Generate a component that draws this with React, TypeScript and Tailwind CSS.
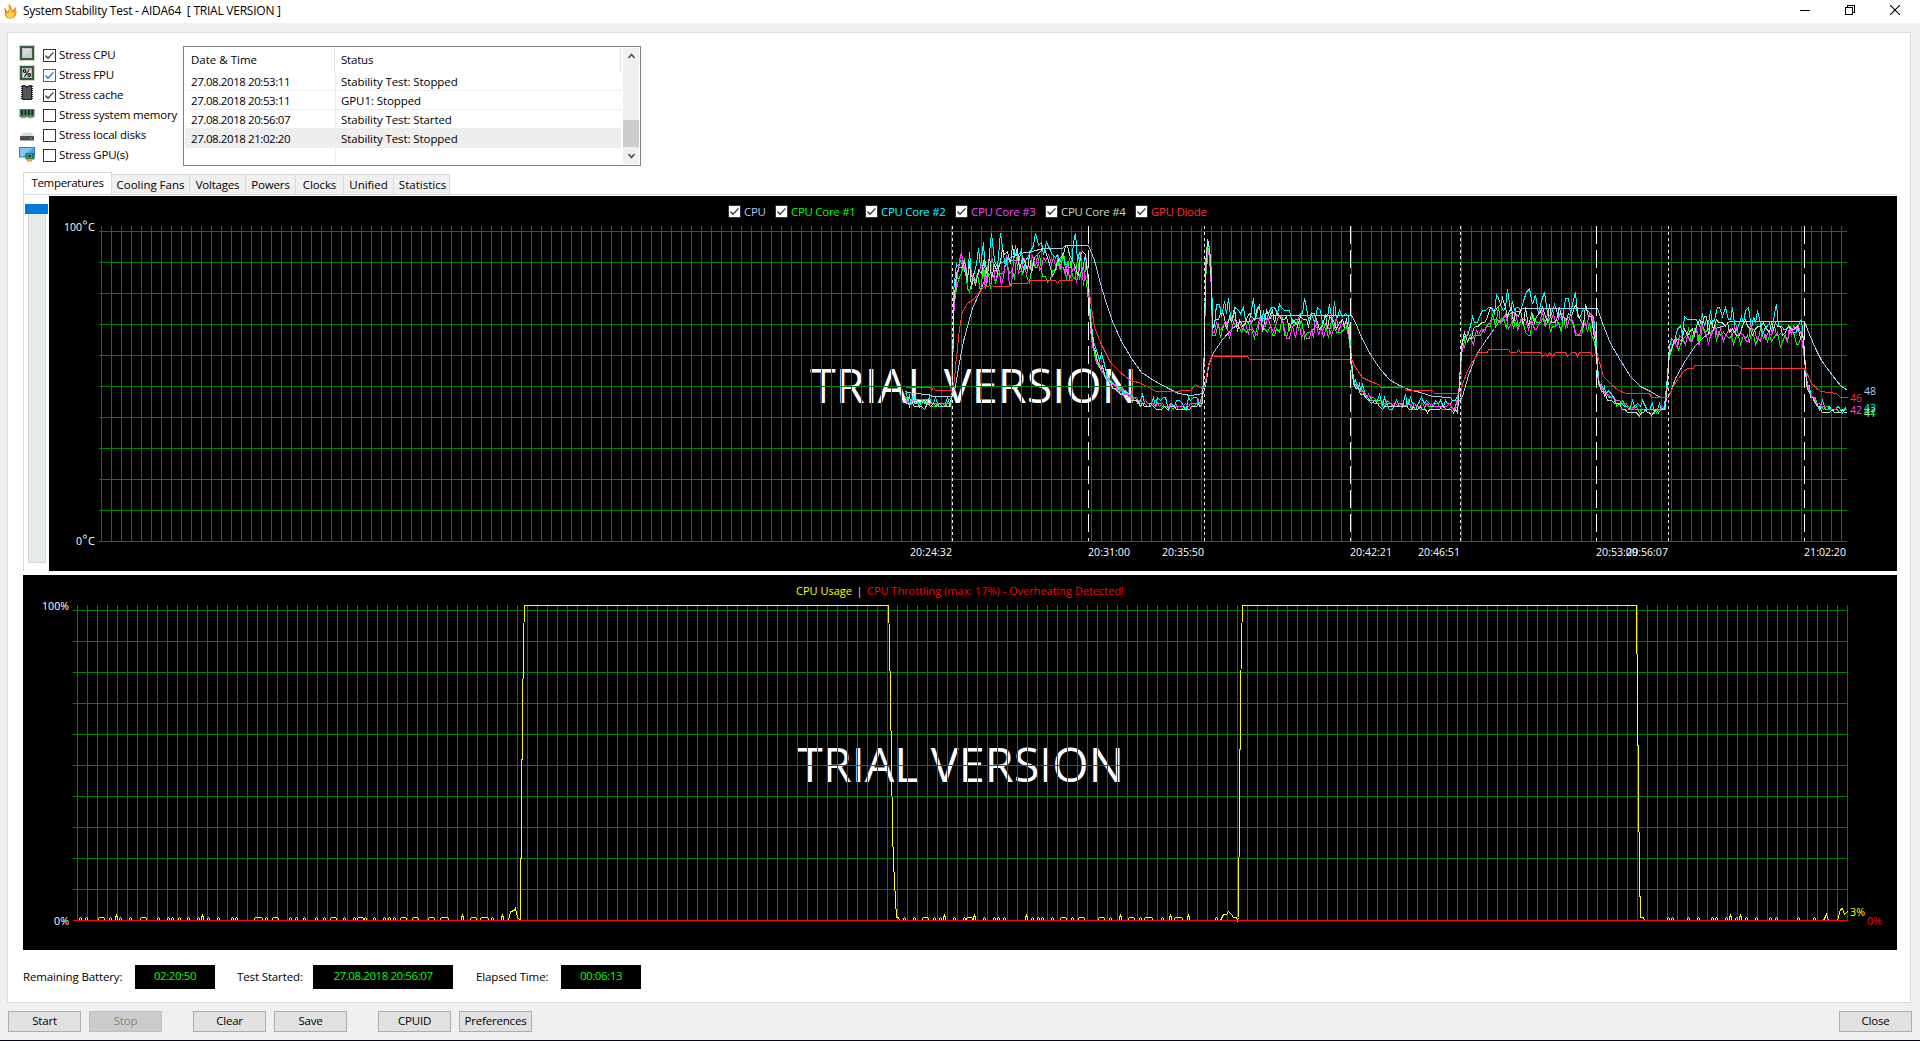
import React from "react";

type Pt = [number, number];
type NoisyPt = [number, number, number];

/* ---------- sensor data ---------- */

const cpuPts: Pt[] = [
  [905, 391], [912, 393], [928, 394], [932, 396], [951, 396], [955, 386], [958, 367], [963, 341], [967, 326], [972, 308],
  [980, 290], [984, 280], [990, 273], [995, 270], [1000, 263], [1008, 258], [1020, 253], [1032, 251], [1042, 248], [1062, 248], [1065, 245],
  [1088, 245], [1094, 260], [1100, 283], [1106, 303], [1112, 321], [1121, 341], [1131, 358], [1141, 372], [1155, 381],
  [1168, 388], [1178, 393], [1190, 395], [1203, 393], [1206, 380], [1208, 366], [1212, 354], [1222, 339], [1232, 328],
  [1242, 321], [1252, 321], [1253, 318], [1270, 318], [1271, 315], [1351, 315], [1355, 322], [1361, 337], [1370, 354], [1380, 369],
  [1389, 379], [1397, 384], [1408, 389], [1420, 392], [1432, 396], [1450, 397], [1452, 400], [1459, 400], [1462, 396], [1468, 375],
  [1476, 354], [1486, 339], [1494, 328], [1500, 319], [1512, 312], [1520, 311], [1522, 308], [1597, 308], [1602, 323], [1610, 343],
  [1620, 360], [1630, 376], [1640, 386], [1650, 391], [1660, 397], [1668, 397], [1675, 378], [1685, 360], [1695, 345],
  [1703, 337], [1715, 328], [1725, 325], [1729, 321], [1804, 321], [1809, 334], [1815, 348], [1821, 360], [1832, 375],
  [1840, 385], [1847, 390],
];

const gpuPts: Pt[] = [
  [905, 387], [930, 387], [931, 390], [933, 387], [935, 390], [951, 390], [954, 380], [955, 365], [957, 348], [959, 328], [962, 311],
  [967, 303], [974, 298], [980, 290], [984, 286], [988, 286], [990, 283], [993, 286], [1009, 286], [1010, 283], [1027, 283], [1028, 280], [1055, 280], [1057, 283],
  [1059, 280], [1072, 280], [1073, 277], [1087, 277], [1090, 300], [1094, 327], [1100, 342], [1110, 362], [1120, 372], [1130, 380],
  [1138, 382], [1145, 385], [1155, 391], [1178, 391], [1180, 390], [1190, 390], [1195, 384], [1199, 387], [1204, 387], [1208, 364],
  [1211, 356], [1247, 356], [1249, 359], [1351, 359], [1355, 367], [1362, 377], [1370, 381], [1378, 384], [1380, 387], [1404, 387],
  [1406, 390], [1432, 390], [1434, 393], [1460, 393], [1463, 381], [1468, 368], [1478, 352], [1487, 352], [1488, 349],
  [1508, 349], [1510, 352], [1516, 352], [1518, 349], [1520, 352], [1540, 352], [1542, 356], [1545, 353], [1547, 356], [1549, 352], [1552, 356],
  [1555, 352], [1565, 352], [1567, 356], [1571, 352], [1575, 352], [1577, 356], [1579, 352], [1590, 352], [1592, 356], [1596, 352],
  [1599, 362], [1603, 376], [1610, 383], [1618, 390], [1626, 393], [1649, 393], [1651, 397], [1668, 397], [1673, 385],
  [1683, 371], [1687, 368], [1693, 368], [1694, 365], [1738, 365], [1741, 368], [1804, 368], [1808, 376], [1811, 383], [1820, 391], [1836, 393],
  [1840, 397], [1847, 397],
];

// x, mean y, noise amplitude
const coreBase: NoisyPt[] = [
  [905, 396, 3], [910, 400, 4], [930, 401, 5], [950, 401, 5], [952, 388, 0], [953, 300, 6], [955, 276, 10], [959, 262, 18], [963, 250, 18], [966, 275, 16],
  [975, 267, 14], [990, 262, 17], [1010, 258, 16], [1040, 254, 16], [1086, 258, 16], [1088, 282, 2], [1090, 318, 1],
  [1093, 340, 2], [1096, 352, 4], [1100, 360, 6], [1105, 373, 5], [1115, 385, 4], [1130, 394, 4], [1145, 400, 4],
  [1155, 403, 5], [1170, 404, 5], [1190, 403, 5], [1202, 398, 3], [1204, 345, 0], [1205, 265, 4], [1207, 238, 3], [1209, 242, 8], [1211, 268, 2],
  [1212, 322, 4], [1216, 318, 10], [1225, 315, 12], [1280, 315, 12], [1346, 316, 11], [1349, 330, 2], [1351, 358, 1], [1353, 380, 3], [1360, 388, 4],
  [1370, 396, 4], [1380, 401, 5], [1395, 402, 5], [1430, 404, 5], [1457, 405, 4], [1459, 380, 0], [1461, 345, 2], [1464, 332, 10],
  [1480, 319, 9], [1490, 308, 10], [1500, 303, 11], [1510, 306, 11], [1520, 311, 12], [1592, 311, 12], [1596, 345, 2],
  [1598, 380, 2], [1605, 391, 4], [1615, 399, 5], [1630, 406, 5], [1650, 407, 5], [1665, 405, 4], [1667, 375, 0],
  [1669, 345, 2], [1674, 336, 7], [1682, 329, 9], [1692, 320, 11], [1720, 322, 11], [1802, 324, 11], [1804, 350, 1],
  [1806, 380, 2], [1810, 390, 4], [1817, 400, 5], [1824, 406, 4], [1846, 408, 4],
];

const markers: { x: number; kind: "start" | "stop"; time: string }[] = [
  { x: 952, kind: "start", time: "20:24:32" },
  { x: 1088, kind: "stop", time: "20:31:00" },
  { x: 1204, kind: "start", time: "20:35:50" },
  { x: 1350, kind: "stop", time: "20:42:21" },
  { x: 1460, kind: "start", time: "20:46:51" },
  { x: 1596, kind: "stop", time: "20:53:09" },
  { x: 1668, kind: "start", time: "20:56:07" },
  { x: 1804, kind: "stop", time: "21:02:20" },
];

function rng(seed: number) {
  let s = seed;
  return () => {
    s = (s * 1664525 + 1013904223) % 4294967296;
    return s / 4294967296;
  };
}

function sample(points: NoisyPt[], x: number): [number, number] {
  for (let i = 1; i < points.length; i++) {
    if (x <= points[i][0]) {
      const a = points[i - 1];
      const b = points[i];
      const t = (x - a[0]) / (b[0] - a[0]);
      return [a[1] + (b[1] - a[1]) * t, a[2] + (b[2] - a[2]) * t];
    }
  }
  const last = points[points.length - 1];
  return [last[1], last[2]];
}

// Steep edges keep a fine step; the noisy plateaus are sampled every two or three pixels.
function coreLine(seed: number, hot: number, cold: number, coldAmp: number, spike: number) {
  const rand = rng(seed);
  const out: string[] = [];
  let x = 905;
  while (x <= 1846) {
    const [y, amp] = sample(coreBase, x);
    const w = Math.max(0, Math.min(1, (385 - y) / 60));
    const r = rand() * 2 - 1;
    const shaped = Math.sign(r) * Math.pow(Math.abs(r), 1.4) * 1.15;
    const n = shaped < 0 ? shaped * spike : shaped * 0.9;
    const a = w > 0.5 ? amp : amp * coldAmp;
    const v = y + cold + (hot - cold) * w + n * a;
    out.push(`${x + 0.5},${Math.round(v / 3.1) * 3.1 + 0.5}`);
    x += amp < 4 ? 1 : rand() > 0.5 ? 3 : 2;
  }
  return out.join(" ");
}

const toLine = (pts: Pt[]) => pts.map(([x, y]) => `${x + 0.5},${y + 0.5}`).join(" ");

const series = [
  { color: "#a6caf0", points: toLine(cpuPts) },
  { color: "#00ff00", points: coreLine(77, 12, 2, 0.8, 0.9) },
  { color: "#00ffff", points: coreLine(19, -1, 1, 1.1, 1.5) },
  { color: "#ff40ff", points: coreLine(5, 12, 2, 0.5, 1) },
  { color: "#c0dcc0", points: coreLine(41, 4, 5, 0.6, 0.9) },
  { color: "#ff3030", points: toLine(gpuPts) },
];

/* CPU usage: small one-percent blips along the floor. [x, half plateau, height] */
const blips: [number, number, number][] = [
  [80, 0, 3], [86, 0, 3], [101, 2, 3], [110, 0, 3], [116, 0, 6], [120, 0, 3], [130, 0, 3], [143, 2, 3], [158, 0, 3],
  [168, 0, 3], [172, 0, 3], [179, 0, 3], [188, 0, 3], [198, 0, 3], [202, 0, 6], [208, 0, 3], [218, 0, 3], [232, 0, 3],
  [236, 0, 3], [258, 3, 3], [266, 0, 3], [275, 2, 3], [290, 0, 3], [296, 0, 3], [304, 0, 3], [316, 0, 3], [324, 0, 3],
  [333, 2, 3], [344, 0, 3], [354, 0, 3], [360, 2, 3], [365, 0, 3], [374, 0, 3], [384, 0, 3], [389, 0, 3], [394, 0, 3],
  [403, 2, 3], [415, 2, 3], [431, 2, 3], [444, 3, 3], [462, 0, 6], [473, 2, 3], [484, 3, 3], [492, 0, 3], [502, 0, 6],
];
const blips2: [number, number, number][] = [
  [904, 0, 3], [914, 0, 3], [925, 2, 3], [934, 0, 3], [940, 0, 3], [944, 0, 6], [954, 0, 3], [964, 0, 3], [969, 2, 3],
  [974, 0, 6], [984, 0, 3], [994, 0, 3], [998, 0, 3], [1004, 0, 3], [1026, 0, 6], [1032, 0, 3], [1038, 0, 3],
  [1042, 0, 3], [1052, 0, 3], [1063, 2, 3], [1072, 0, 3], [1081, 2, 3], [1101, 2, 3], [1110, 0, 3], [1120, 0, 6],
  [1131, 2, 3], [1140, 0, 3], [1148, 3, 3], [1162, 0, 3], [1170, 0, 6], [1178, 3, 3], [1188, 0, 6], [1216, 0, 3],
];
const blips3: [number, number, number][] = [
  [1668, 0, 3], [1672, 0, 3], [1688, 0, 3], [1698, 0, 3], [1712, 0, 3], [1716, 0, 3], [1726, 0, 3], [1730, 0, 6],
  [1736, 0, 3], [1740, 0, 6], [1746, 0, 3], [1756, 0, 3], [1770, 0, 3], [1776, 0, 3], [1798, 0, 3], [1814, 0, 3], 
];
const blipPts = (list: [number, number, number][]): Pt[] =>
  list.flatMap(([x, p, h]): Pt[] => [[x - 1 - p, 920], [x - 1 - p, 918], [x - p, 920 - h], [x + p, 920 - h], [x + 1 + p, 918], [x + 1 + p, 920]]);

const usage = toLine([
  [77, 920], ...blipPts(blips), [508, 920], [510, 911], [514, 910], [515, 908], [517, 917], [519, 919], [520, 919],
  [521, 800], [522, 720], [523, 640], [524, 605], [888, 605], [889, 640], [890, 700], [891, 760], [892, 830], [893, 862],
  [894, 880], [895, 900], [896, 917], [898, 917], [899, 920], ...blipPts(blips2),
  [1220, 920], [1223, 914], [1226, 914], [1228, 911], [1231, 914], [1233, 917], [1236, 917], [1237, 920], [1238, 917],
  [1239, 800], [1240, 700], [1241, 640], [1242, 605], [1636, 605], [1637, 700], [1639, 874], [1640, 917], [1643, 917], [1644, 920],
  ...blipPts(blips3), [1823, 920], [1826, 914], [1827, 917], [1828, 920], [1837, 920], [1840, 909], [1842, 908], [1844, 914], [1847, 911],
]);

/* ---------- shared pieces ---------- */

function Check({ on, blue, light }: { on?: boolean; blue?: boolean; light?: boolean }) {
  const c = blue ? "#0078d7" : "#333333";
  return (
    <svg width="13" height="13" viewBox="0 0 13 13" className="shrink-0">
      <rect x="0.5" y="0.5" width="12" height="12" fill="#fff" stroke={light ? "#333" : c} />
      {on && <path d="M2.5 6.5 5 9.2 10.5 3.4" fill="none" stroke={blue ? c : "#333"} strokeWidth="1.3" />}
    </svg>
  );
}

function Label({
  x, y, w, fill = "#fff", size = 11.5, children,
}: { x: number; y: number; w: number; fill?: string; size?: number; children: string }) {
  return (
    <text x={x} y={y + 4} fill={fill} fontSize={size} textLength={w} lengthAdjust="spacingAndGlyphs">
      {children}
    </text>
  );
}

function Grid({ x0, x1, vx, top, first }: { x0: number; x1: number; vx: number; top: number; first: number }) {
  const cols: number[] = [];
  for (let x = vx; x <= x1; x += 10) cols.push(x);
  let d = "";
  for (const x of cols) d += `M${x + 0.5} ${top}V${first + 310}`;
  for (let i = 0; i <= 10; i++) d += `M${x0} ${first + i * 31 + 0.5}H${x1}`;
  return <path d={d} stroke="#008000" fill="none" />;
}

/* ---------- stress option icons ---------- */

const ChipIcon = ({ percent }: { percent?: boolean }) => (
  <svg width="16" height="16" viewBox="0 0 16 16">
    <rect x="0.5" y="0.5" width="15" height="15" fill="none" stroke="#b8a860" strokeDasharray="1 1" />
    <rect x="1" y="1" width="14" height="14" fill="#2e6045" />
    <rect x="3.5" y="3.5" width="9" height="9" fill={percent ? "#e4e4e4" : "#dcdcdc"} stroke={percent ? "#b5b5b5" : "#c4c4c4"} />
    {percent ? (
      <g stroke="#111" fill="none" strokeWidth="1.2">
        <circle cx="5.6" cy="6" r="1.3" />
        <circle cx="10.2" cy="10" r="1.3" />
        <path d="M10.3 4.2 5.6 11.8" />
      </g>
    ) : (
      <path d="M4 12 12 4v8z" fill="#cccccc" />
    )}
  </svg>
);

const CacheIcon = () => (
  <svg width="16" height="16" viewBox="0 0 16 16">
    <path d="M2 1.5h12M2 3.5h12M2 5.5h12M2 7.5h12M2 9.5h12M2 11.5h12M2 13.5h12" stroke="#222" />
    <path d="M3.500 .5H6l1 1.500h2l1-1.500h2.500v14h-9z" fill="#55555a" stroke="#1b1b1b" />
  </svg>
);

const MemoryIcon = () => (
  <svg width="16" height="16" viewBox="0 0 16 16">
    <rect x="0.5" y="3" width="15" height="8" fill="#3f8a63" />
    <path d="M2 4h2v5H2zM5.5 4h2v5h-2zM9 4h2v5H9zM12.4 4h2v5h-2z" fill="#26332c" />
    <path d="M2 11.5h5M9 11.5h5" stroke="#d08a3c" strokeWidth="1.4" />
  </svg>
);

const DiskIcon = () => (
  <svg width="16" height="16" viewBox="0 0 16 16">
    <path d="M4 6.5h8l3 4H1z" fill="#dadada" />
    <rect x="1" y="10" width="14" height="4.5" rx="0.8" fill="#4c4c4c" />
    <rect x="11" y="11.8" width="1.6" height="1.2" fill="#35d04a" />
  </svg>
);

const GpuIcon = () => (
  <svg width="16" height="16" viewBox="0 0 16 16">
    <rect x="0.5" y="1.5" width="15" height="9.5" fill="#47a7e6" stroke="#2b7fc0" />
    <path d="M1 2h13L4 10.5H1z" fill="#7cc8f5" />
    <rect x="6.5" y="7" width="9" height="6.5" fill="#2f7a4d" />
    <rect x="9" y="8.4" width="3.6" height="3.4" fill="#1b3626" stroke="#8bc4a0" strokeWidth="0.6" />
    <path d="M8 13.5h5v2H8z" fill="#e5a02c" />
  </svg>
);

const options: { label: string; icon: React.ReactNode; on?: boolean; blue?: boolean }[] = [
  { label: "Stress CPU", icon: <ChipIcon />, on: true },
  { label: "Stress FPU", icon: <ChipIcon percent />, on: true, blue: true },
  { label: "Stress cache", icon: <CacheIcon />, on: true },
  { label: "Stress system memory", icon: <MemoryIcon /> },
  { label: "Stress local disks", icon: <DiskIcon /> },
  { label: "Stress GPU(s)", icon: <GpuIcon /> },
];

const log = [
  ["27.08.2018 20:53:11", "Stability Test: Stopped"],
  ["27.08.2018 20:53:11", "GPU1: Stopped"],
  ["27.08.2018 20:56:07", "Stability Test: Started"],
  ["27.08.2018 21:02:20", "Stability Test: Stopped"],
];

/* ---------- sections ---------- */

function TitleBar() {
  return (
    <header className="flex h-[23px] shrink-0 items-center bg-white pl-1">
      <svg width="13" height="16" viewBox="0 0 13 16" className="-mt-px shrink-0">
        <path d="M0 4.500 2 7 2.800 9 4.800 6.500 4.500 .5 7 3 8 6.500 9 7.500 12 4 11.200 7 12.800 8.800 12 12.500 9.500 15 6 15.800 2.800 15 .8 12 1.200 8z" fill="#f79420" />
        <path d="M2 9.500 4 11 5.500 9 5.400 4.500 7.200 8 8 10 10.500 8.500 10.200 12 8.500 14.500 5 14.800 2.800 13z" fill="#ffd84a" />
        <path d="M0 4.500 2 7 2.800 9 1.500 10zM12 4 11.200 7 9.600 8.500 9 7.500z" fill="#f0552a" />
      </svg>
      <span className="-mt-px ml-1.5 text-[12px] tracking-[-0.24px] whitespace-pre">System Stability Test - AIDA64  [ TRIAL VERSION ]</span>
      <div className="ml-auto flex h-full items-center gap-[35px] pr-[20px] pb-[3px]">
        <svg width="10" height="10" viewBox="0 0 10 10" shapeRendering="crispEdges"><path d="M0 5.500h10" stroke="#000" /></svg>
        <svg width="10" height="10" viewBox="0 0 10 10" shapeRendering="crispEdges">
          <path d="M.5 2.500h7v7h-7zM2.500 2.500v-2h7v7h-2" fill="none" stroke="#000" />
        </svg>
        <svg width="10" height="10" viewBox="0 0 10 10"><path d="M0 0 10 10M10 0 0 10" stroke="#000" strokeWidth="1.1" /></svg>
      </div>
    </header>
  );
}

function EventLog() {
  return (
    <div className="flex h-[120px] w-[458px] border border-[#7a7f88] bg-white py-px">
      <div className="w-[437px] pl-px">
        <div className="flex h-6 items-center">
          <div className="flex h-full w-[150px] items-center border-r border-[#e2e2e2] pl-1.5 tracking-[0px]">Date &amp; Time</div>
          <div className="flex h-full flex-1 items-center border-r border-[#e2e2e2] pl-1.5 tracking-[-0.2px]">Status</div>
        </div>
        {log.map(([time, status], i) => (
          <div key={i} className={`flex h-[19px] items-center border-b border-[#eeeeee] ${i === 3 ? "bg-[#eeeeee]" : ""}`}>
            <div className="w-[151px] border-r border-[#eeeeee] pt-px pl-1.5 leading-[17px] tracking-[-0.42px]">{time}</div>
            <div className="pt-px pl-[5px] leading-[17px] tracking-[-0.09px]">{status}</div>
          </div>
        ))}
        <div className="h-4 w-[151px] border-r border-[#eeeeee]" />
      </div>
      <div className="ml-[2px] flex w-4 flex-col items-center bg-[#f0f0f0]">
        <svg width="9" height="17" viewBox="0 0 9 17"><path d="M1.500 10 4.500 6.500 7.500 10" fill="none" stroke="#505050" strokeWidth="1.6" /></svg>
        <div className="mt-auto h-[27px] w-full bg-[#cdcdcd]" />
        <svg width="9" height="17" viewBox="0 0 9 17"><path d="M1.500 7 4.500 10.500 7.500 7" fill="none" stroke="#505050" strokeWidth="1.6" /></svg>
      </div>
    </div>
  );
}

function Tabs() {
  return (
    <nav className="ml-[15px] flex h-[22px] items-end">
      <div className="flex h-[22px] w-[89px] justify-center border border-b-0 border-[#d9d9d9] bg-white pt-px leading-[17px] tracking-[-0.3px]">Temperatures</div>
      {[
        ["Cooling Fans", "w-[78px] tracking-[-0.02px]"],
        ["Voltages", "w-[56px] tracking-[-0.2px]"],
        ["Powers", "w-[50px] tracking-[-0.15px]"],
        ["Clocks", "w-[48px] tracking-[-0.1px]"],
        ["Unified", "w-[50px] tracking-[-0.05px]"],
        ["Statistics", "w-[56px] pl-0.5 tracking-[0px]"],
      ].map(([name, w]) => (
        <div key={name} className={`flex h-5 items-center justify-center border-t border-r border-[#d9d9d9] bg-[#f0f0f0] whitespace-nowrap ${w}`}>
          {name}
        </div>
      ))}
      <div className="flex-1" />
    </nav>
  );
}

function TemperatureChart() {
  const legend = [
    ["CPU", "text-[#a6caf0]", "w-[31px]"],
    ["CPU Core #1", "text-[#00ff00]", "w-[74px]"],
    ["CPU Core #2", "text-[#00ffff]", "w-[74px]"],
    ["CPU Core #3", "text-[#ff40ff]", "w-[74px]"],
    ["CPU Core #4", "text-[#c0dcc0]", "w-[74px]"],
    ["GPU Diode", "text-[#ff3030]", "w-[74px]"],
  ];
  return (
    <div className="h-[375px] w-[1848px] bg-black">
      <div className="flex h-[30px] items-center pt-px pl-[679px]">
        {legend.map(([name, color, w]) => (
          <div key={name} className="flex items-center gap-[3px]">
            <Check on light />
            <span className={`whitespace-nowrap tracking-[-0.3px] ${color} ${w}`}>{name}</span>
          </div>
        ))}
      </div>
      <svg width="1848" height="345" viewBox="49 226 1848 345" className="block overflow-visible">
        <text x="810" y="402.500" fill="#fff" fontSize="47" textLength="327" lengthAdjust="spacingAndGlyphs">TRIAL VERSION</text>
        <g shapeRendering="crispEdges">
          <Grid x0={99} x1={1847} vx={101} top={226} first={231} />
          {series.map((s, i) => (
            <polyline key={i} points={s.points} fill="none" stroke={s.color} />
          ))}
          {markers.map((m) => (
            <path key={m.x} d={`M${m.x + 0.5} 226V541`} stroke="#fff" strokeDasharray={m.kind === "start" ? "3 3" : "18 6"} />
          ))}
        </g>
        {markers.map((m) => (
          <Label key={m.x} x={m.kind === "start" ? m.x - 42 : m.x} y={552} w={42}>{m.time}</Label>
        ))}
        <Label x={64} y={227} w={18}>100</Label>
        <circle cx="85" cy="222.500" r="1.600" fill="none" stroke="#fff" strokeWidth="0.9" />
        <Label x={88} y={227} w={7}>C</Label>
        <Label x={76} y={541} w={6}>0</Label>
        <circle cx="85" cy="536.500" r="1.600" fill="none" stroke="#fff" strokeWidth="0.9" />
        <Label x={88} y={541} w={7}>C</Label>
        <Label x={1864} y={391} w={12} fill="#a6caf0">48</Label>
        <Label x={1864} y={411} w={12} fill="#00ff00">42</Label>
        <Label x={1864} y={408} w={12} fill="#00ffff">43</Label>
        <Label x={1850} y={410} w={12} fill="#ff40ff">42</Label>
        <Label x={1864} y={413} w={12} fill="#c0dcc0">41</Label>
        <Label x={1850} y={398} w={12} fill="#ff3030">46</Label>
      </svg>
    </div>
  );
}

function UsageChart() {
  return (
    <div className="mt-1 ml-[15px] h-[375px] w-[1874px] bg-black">
      <svg width="1874" height="375" viewBox="23 575 1874 375" className="block">
        <text x="797" y="781.500" fill="#fff" fontSize="47" textLength="327" lengthAdjust="spacingAndGlyphs">TRIAL VERSION</text>
        <g shapeRendering="crispEdges">
          <Grid x0={73} x1={1848} vx={77} top={605} first={610} />
          <polyline points={usage} fill="none" stroke="#ffff00" />
          <path d="M74 920.5H1847" stroke="#ff0000" />
        </g>
        <Label x={796} y={591} w={56} fill="#ffff00">CPU Usage</Label>
        <Label x={857} y={591} w={5}>|</Label>
        <Label x={867} y={591} w={257} fill="#ff0000">CPU Throttling (max: 17%) - Overheating Detected!</Label>
        <Label x={42} y={606} w={27}>100%</Label>
        <Label x={54} y={921} w={15}>0%</Label>
        <Label x={1850} y={912} w={15} fill="#ffff00">3%</Label>
        <Label x={1867} y={921} w={15} fill="#ff0000">0%</Label>
      </svg>
    </div>
  );
}

function Readout({ label, value, labelW, w }: { label: string; value: string; labelW: string; w: string }) {
  return (
    <div className="flex items-center">
      <span className={`whitespace-nowrap tracking-[-0.13px] ${labelW}`}>{label}</span>
      <div className={`flex h-6 items-center justify-center bg-black pb-0.5 tracking-[-0.42px] text-[#00ff00] ${w}`}>{value}</div>
    </div>
  );
}

function Button({ children, disabled, className = "" }: { children: string; disabled?: boolean; className?: string }) {
  return (
    <button
      className={`flex h-[21px] w-[73px] items-center justify-center border pb-px tracking-[-0.2px] ${
        disabled ? "border-[#bfbfbf] bg-[#cccccc] text-[#838383]" : "border-[#adadad] bg-[#e1e1e1] text-black"
      } ${className}`}
    >
      {children}
    </button>
  );
}

export default function App() {
  return (
    <div className="flex h-[1041px] w-[1920px] flex-col overflow-hidden bg-[#f0f0f0] font-['Open_Sans','Noto_Sans',sans-serif] text-[11.5px] leading-4 text-black">
      <TitleBar />
      <main className="mt-[9px] ml-[7px] h-[971px] w-[1904px] shrink-0 border border-[#dcdcdc] bg-white">
        <div className="flex h-[139px] pt-[13px]">
          <div className="-mt-px ml-[11px] w-[164px]">
            {options.map((o, i) => (
              <div key={o.label} className="flex h-5 items-center">
                <span className={i < 3 ? "-mt-1" : "-mt-0.5"}>{o.icon}</span>
                <span className="ml-2 flex items-center gap-[3px]">
                  <Check on={o.on} blue={o.blue} />
                  <span className="tracking-[-0.17px] whitespace-nowrap">{o.label}</span>
                </span>
              </div>
            ))}
          </div>
          <EventLog />
        </div>
        <Tabs />
        <div className="ml-[15px] flex h-[377px] w-[1874px] border-l border-[#dcdcdc]">
          <div className="flex w-[25px] flex-col items-center border-t border-[#dcdcdc] pt-[9px]">
            <div className="h-[10px] w-[23px] bg-[#0078d7]" />
            <div className="h-[349px] w-[18px] border border-t-0 border-[#d6d6d6] bg-[#e7eaea]" />
          </div>
          <div className="w-[1848px] border-t border-[#dcdcdc] pt-px">
            <TemperatureChart />
          </div>
        </div>
        <UsageChart />
        <div className="mt-[15px] flex items-center pl-[15px]">
          <Readout label="Remaining Battery:" value="02:20:50" labelW="w-[112px]" w="w-[80px]" />
          <div className="w-[22px]" />
          <Readout label="Test Started:" value="27.08.2018 20:56:07" labelW="w-[76px]" w="w-[140px]" />
          <div className="w-[23px]" />
          <Readout label="Elapsed Time:" value="00:06:13" labelW="w-[85px]" w="w-[80px]" />
        </div>
      </main>
      <footer className="mt-2 flex shrink-0 pr-2 pl-2">
        <Button>Start</Button>
        <Button disabled className="ml-2">Stop</Button>
        <Button className="ml-[31px]">Clear</Button>
        <Button className="ml-2">Save</Button>
        <Button className="ml-[31px]">CPUID</Button>
        <Button className="ml-2">Preferences</Button>
        <Button className="ml-auto">Close</Button>
      </footer>
      <div className="mt-auto h-px shrink-0 bg-[#06061a]" />
    </div>
  );
}
